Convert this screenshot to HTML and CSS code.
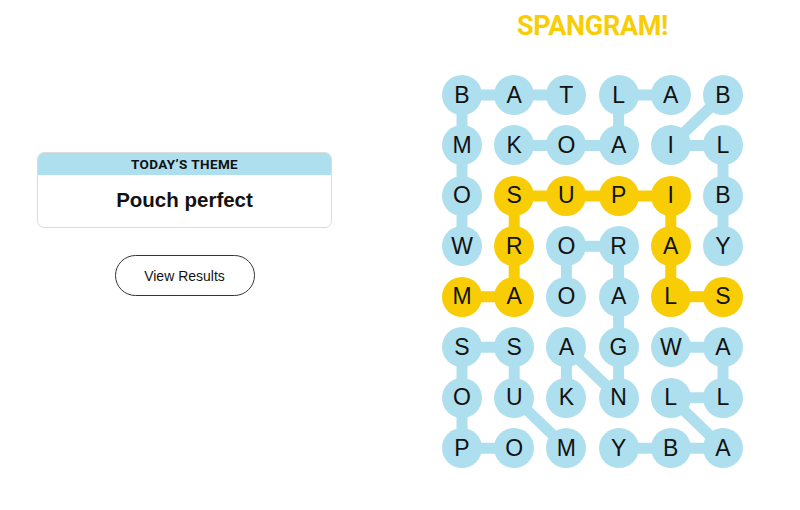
FILE: index.html
```html
<!DOCTYPE html>
<html>
<head>
<meta charset="utf-8">
<link rel="stylesheet" href="styles.css">
</head>
<body>
<div class="page">
  <section class="left">
    <div class="theme-card">
      <div class="theme-head">TODAY’S THEME</div>
      <div class="theme-body">Pouch perfect</div>
    </div>
    <button class="results-btn">View Results</button>
  </section>
  <section class="right">
    <h1 class="banner">SPANGRAM!</h1>
    <div class="board">
      <svg class="links" viewBox="0 0 301 393" width="301" height="393">
        <g class="blue" stroke="#aedfee" stroke-width="11" fill="none">
          <!-- WOMBAT -->
          <polyline points="20,171.35 20,120.9 20,70.45 20,20 72.2,20 124.4,20"/>
          <!-- KOALA -->
          <polyline points="72.2,70.45 124.4,70.45 176.6,70.45 176.6,20 228.8,20"/>
          <!-- BILBY -->
          <polyline points="281,20 228.8,70.45 281,70.45 281,120.9 281,171.35"/>
          <!-- KANGAROO -->
          <polyline points="124.4,322.7 124.4,272.25 176.6,322.7 176.6,272.25 176.6,221.8 176.6,171.35 124.4,171.35 124.4,221.8"/>
          <!-- OPOSSUM -->
          <polyline points="72.2,373.15 20,373.15 20,322.7 20,272.25 72.2,272.25 72.2,322.7 124.4,373.15"/>
          <!-- WALLABY -->
          <polyline points="228.8,272.25 281,272.25 281,322.7 228.8,322.7 281,373.15 228.8,373.15 176.6,373.15"/>
        </g>
        <g stroke="#f8cd05" stroke-width="11" fill="none">
          <!-- MARSUPIALS -->
          <polyline points="20,221.8 72.2,221.8 72.2,171.35 72.2,120.9 124.4,120.9 176.6,120.9 228.8,120.9 228.8,171.35 228.8,221.8 281,221.8"/>
        </g>
      </svg>
      <div class="grid">
        <span class="cell">B</span><span class="cell">A</span><span class="cell">T</span><span class="cell">L</span><span class="cell">A</span><span class="cell">B</span>
        <span class="cell">M</span><span class="cell">K</span><span class="cell">O</span><span class="cell">A</span><span class="cell">I</span><span class="cell">L</span>
        <span class="cell">O</span><span class="cell gold">S</span><span class="cell gold">U</span><span class="cell gold">P</span><span class="cell gold">I</span><span class="cell">B</span>
        <span class="cell">W</span><span class="cell gold">R</span><span class="cell">O</span><span class="cell">R</span><span class="cell gold">A</span><span class="cell">Y</span>
        <span class="cell gold">M</span><span class="cell gold">A</span><span class="cell">O</span><span class="cell">A</span><span class="cell gold">L</span><span class="cell gold">S</span>
        <span class="cell">S</span><span class="cell">S</span><span class="cell">A</span><span class="cell">G</span><span class="cell">W</span><span class="cell">A</span>
        <span class="cell">O</span><span class="cell">U</span><span class="cell">K</span><span class="cell">N</span><span class="cell">L</span><span class="cell">L</span>
        <span class="cell">P</span><span class="cell">O</span><span class="cell">M</span><span class="cell">Y</span><span class="cell">B</span><span class="cell">A</span>
      </div>
    </div>
  </section>
</div>
</body>
</html>
```
FILE: styles.css
```css
* { box-sizing: border-box; }
html, body { margin: 0; padding: 0; background: #ffffff; }
body {
  font-family: "Liberation Sans", Arial, sans-serif;
  color: #121212;
  width: 800px;
  height: 510px;
  overflow: hidden;
}
.page {
  display: flex;
  align-items: flex-start;
}
.left {
  width: 369px;
  padding-top: 152px;
  display: flex;
  flex-direction: column;
  align-items: center;
}
.theme-card {
  width: 295px;
  border: 1px solid #dcdcdc;
  border-radius: 7px;
  overflow: hidden;
  background: #fff;
}
.theme-head {
  background: #aedfee;
  height: 22px;
  line-height: 22px;
  text-align: center;
  font-family: Roboto, "Liberation Sans", sans-serif;
  font-weight: 700;
  font-size: 13.5px;
  letter-spacing: 0.4px;
  color: #121212;
}
.theme-body {
  height: 52px;
  display: flex;
  align-items: center;
  justify-content: center;
  font-weight: 700;
  font-size: 20.5px;
  padding-bottom: 2px;
}
.results-btn {
  margin-top: 27px;
  width: 140px;
  height: 41px;
  border: 1px solid #333;
  border-radius: 21px;
  background: #fff;
  font-family: "Liberation Sans", Arial, sans-serif;
  font-size: 14px;
  color: #121212;
  padding: 0;
}
.right {
  margin-left: 73px;
  width: 301px;
  display: flex;
  flex-direction: column;
  align-items: center;
}
.banner {
  margin: 11px 0 0 0;
  height: 64px;
  font-family: Roboto, "Liberation Sans", sans-serif;
  font-weight: 700;
  font-size: 27px;
  line-height: 30px;
  color: #f8cd05;
  letter-spacing: -0.3px;
}
.board {
  position: relative;
  width: 301px;
  height: 393px;
}
.links {
  position: absolute;
  left: 0;
  top: 0;
}
.grid {
  position: relative;
  display: grid;
  grid-template-columns: repeat(6, 40px);
  grid-auto-rows: 40px;
  column-gap: 12.2px;
  row-gap: 10.45px;
}
.cell {
  width: 40px;
  height: 40px;
  border-radius: 50%;
  background: #aedfee;
  display: flex;
  align-items: center;
  justify-content: center;
  font-size: 23px;
  color: #121212;
  line-height: 1;
}
.cell.gold { background: #f8cd05; }
```
